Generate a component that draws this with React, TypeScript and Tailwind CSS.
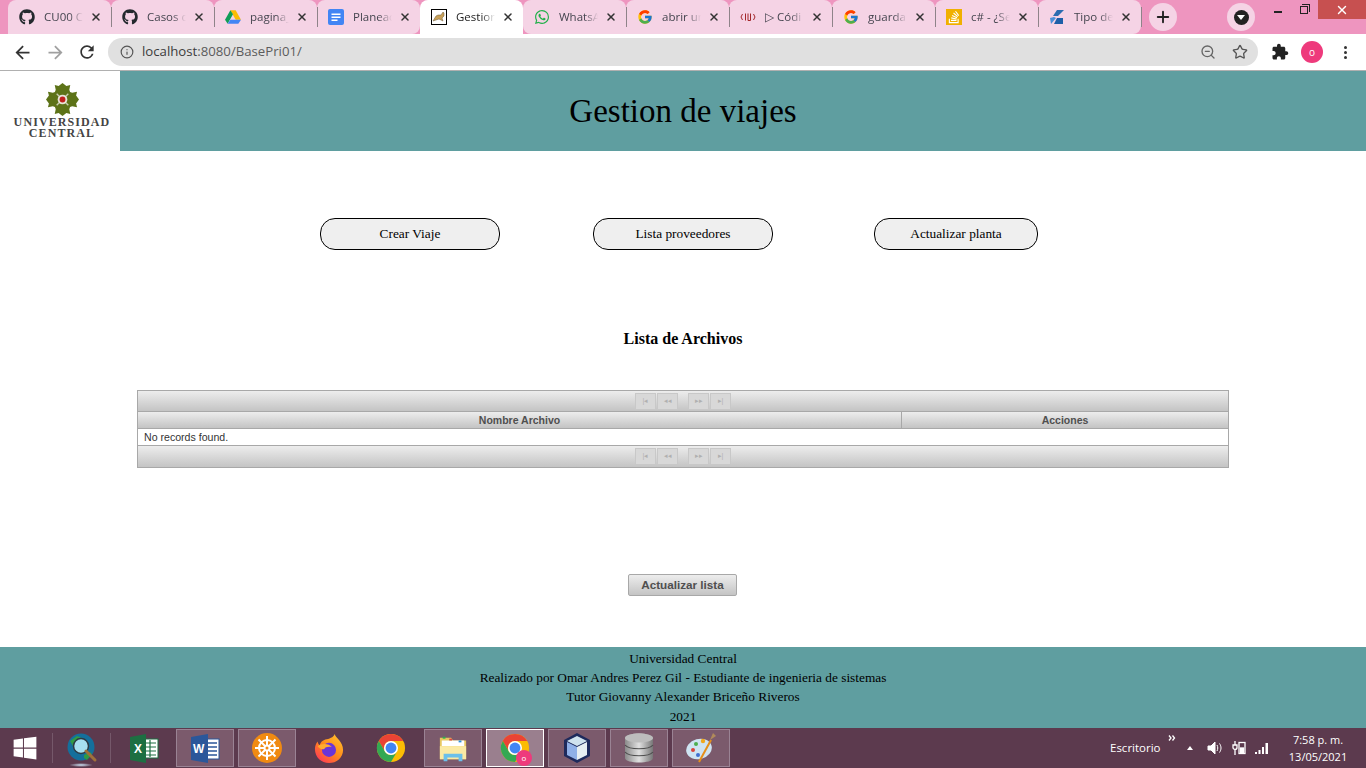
import type { ReactNode } from 'react';
import { FaGithub, FaWindows, FaStackOverflow } from 'react-icons/fa';
import { FcGoogle } from 'react-icons/fc';
import { IoLogoWhatsapp } from 'react-icons/io5';
import { Info, ZoomOut, Star, Plus, X } from 'lucide-react';

const Drive = () => (
  <svg viewBox="0 0 24 24" className="w-4 h-4">
    <path d="M8 2h8l8 14h-8z" fill="#fbbc04" />
    <path d="M8 2L0 16l4 6 8-14z" fill="#0f9d58" />
    <path d="M4 22h16l4-6H8z" fill="#4285f4" />
  </svg>
);

const Docs = () => (
  <svg viewBox="0 0 16 16" className="w-4 h-4">
    <rect width="16" height="16" rx="2" fill="#4285f4" />
    <path d="M3.5 4.5h9v1.6h-9zM3.5 7.5h9v1.6h-9zM3.5 10.5h6v1.6h-6z" fill="#fff" />
  </svg>
);

const Tomcat = () => (
  <svg viewBox="0 0 16 16" className="w-4 h-4">
    <rect x="0.5" y="0.5" width="15" height="15" fill="#fff" stroke="#000" />
    <path d="M2 12l3-5 2-1 3 0 2-3 1 1 0 3-2 2 1 3-2-1-2-1-3 1z" fill="#c9a15a" stroke="#6b5a3a" strokeWidth="0.5" />
  </svg>
);

const Udemy = () => (
  <svg viewBox="0 0 16 16" className="w-4 h-4" fill="none" stroke="#a3262a" strokeWidth="1">
    <path d="M2.500 5l-1.500 3 1.500 3M13.500 5l1.500 3-1.500 3M5.500 4.500v7M8 4.500v7h2.500v-7" />
  </svg>
);

const Stack = () => (
  <span className="w-4 h-4 bg-[#f0b000] flex items-center justify-center text-white">
    <FaStackOverflow className="w-3.5 h-3.5" />
  </span>
);

const Tipo = () => (
  <svg viewBox="0 0 16 16" className="w-4 h-4">
    <path d="M8 1h7L9 7H4z" fill="#2b6cb0" />
    <path d="M1 9l4-1 2 1-5 6z" fill="#4a90d9" />
    <path d="M8 9h6v6H5z" fill="#1d5fa8" />
  </svg>
);

const tabs: { title: string; icon: ReactNode; round?: string; sep?: boolean; active?: boolean }[] = [
  { title: 'CU00 C', icon: <FaGithub className="w-4 h-4 text-[#24292e]" />, sep: true },
  { title: 'Casos de', icon: <FaGithub className="w-4 h-4 text-[#24292e]" />, sep: true },
  { title: 'pagina_', icon: <Drive />, sep: true },
  { title: 'Planeac', icon: <Docs />, round: 'rounded-br-[8px]' },
  { title: 'Gestion', icon: <Tomcat />, active: true },
  { title: 'WhatsA', icon: <IoLogoWhatsapp className="w-4 h-4 text-[#22b04a]" />, round: 'rounded-bl-[8px]', sep: true },
  { title: 'abrir un', icon: <FcGoogle className="w-4 h-4" />, sep: true },
  { title: '▷ Códi', icon: <Udemy />, sep: true },
  { title: 'guarda', icon: <FcGoogle className="w-4 h-4" />, sep: true },
  { title: 'c# - ¿Se', icon: <Stack />, sep: true },
  { title: 'Tipo de', icon: <Tipo />, round: 'rounded-br-[8px]', sep: true },
];

function TabStrip() {
  return (
    <div className="h-[34px] bg-[#ee95bf] flex pl-2 shrink-0">
      {tabs.map((t) => (
        <div
          key={t.title}
          className={`relative w-[103px] h-[34px] flex items-center pl-[11px] rounded-t-[8px] ${t.active ? 'bg-white' : 'bg-[#f5d3e5]'} ${t.round ?? ''}`}
        >
          {t.icon}
          <span className={`ml-[9px] w-[39px] overflow-hidden whitespace-nowrap text-[11.5px] [mask-image:linear-gradient(to_right,black_65%,transparent)] ${t.active ? 'text-[#222]' : 'text-[#45454f]'}`}>
            {t.title}
          </span>
          <X className="absolute left-[82px] top-[11px] w-3 h-3 text-[#333]" strokeWidth={3} />
          {t.sep && <span className="absolute -right-px z-10 top-[7px] w-px h-5 bg-[#8f8389]" />}
        </div>
      ))}
      <div className="ml-2 mt-[3px] w-7 h-7 rounded-full bg-[#f5d3e5] flex items-center justify-center">
        <Plus className="w-[18px] h-[18px] text-[#222]" strokeWidth={2.5} />
      </div>
      <div className="ml-[50px] mt-[3px] w-7 h-7 rounded-full bg-[#f5d3e5] flex items-center justify-center">
        <span className="w-[15px] h-[15px] rounded-full bg-[#222] flex items-center justify-center">
          <span className="w-0 h-0 border-x-[4px] border-x-transparent border-t-[5px] border-t-white mt-[1px]" />
        </span>
      </div>
      <div className="ml-auto flex h-[19px]">
        <div className="w-6 flex items-center justify-center">
          <span className="w-2 h-[2px] bg-[#222] mt-[5px]" />
        </div>
        <div className="w-7 flex items-center justify-center">
          <span className="relative w-2 h-2 border border-[#222] mt-[1px] after:absolute after:left-[1px] after:-top-[3px] after:w-2 after:h-2 after:border-t after:border-r after:border-[#222]" />
        </div>
        <div className="w-12 bg-[#c75050] flex items-center justify-center">
          <X className="w-3.5 h-3.5 text-white" strokeWidth={2.5} />
        </div>
      </div>
    </div>
  );
}

function Toolbar() {
  return (
    <div className="h-[37px] bg-white border-b border-[#b0b0b0] flex items-start shrink-0 pt-1">
      <div className="w-[108px] h-7 flex items-center pl-[12px] gap-[12px]">
        <svg viewBox="0 0 24 24" className="w-[21px] h-[21px]" fill="#333">
          <path d="M20 11H7.830l5.590-5.590L12 4l-8 8 8 8 1.410-1.410L7.830 13H20v-2z" />
        </svg>
        <svg viewBox="0 0 24 24" className="w-[21px] h-[21px]" fill="#a0a0a0">
          <path d="M12 4l-1.410 1.410L16.170 11H4v2h12.170l-5.580 5.590L12 20l8-8z" />
        </svg>
        <svg viewBox="0 0 24 24" className="w-[20px] h-[20px] -ml-px" fill="#333">
          <path d="M17.650 6.350A7.958 7.958 0 0 0 12 4c-4.420 0-7.990 3.580-7.990 8s3.570 8 7.990 8c3.730 0 6.840-2.550 7.730-6h-2.080A5.990 5.990 0 0 1 12 18c-3.310 0-6-2.690-6-6s2.690-6 6-6c1.660 0 3.140.69 4.220 1.780L13 11h7V4l-2.350 2.350z" />
        </svg>
      </div>
      <div className="w-[1150px] h-7 bg-[#e0e0e0] rounded-full flex items-center pl-[12px] pr-[10px]">
        <Info className="w-[14px] h-[14px] text-[#555]" strokeWidth={2} />
        <span className="ml-[8px] text-[13.2px] text-[#3c3c3c]">
          localhost<span className="text-[#5c5c5c]">:8080/BasePri01/</span>
        </span>
        <ZoomOut className="ml-auto w-4 h-4 text-[#666]" strokeWidth={2} />
        <Star className="ml-[16px] w-4 h-4 text-[#555]" strokeWidth={2} />
      </div>
      <div className="flex-1 h-7 flex items-center pl-[13px]">
        <svg viewBox="0 0 24 24" className="w-[18px] h-[18px]" fill="#222">
          <path d="M20.500 11H19V7c0-1.100-.9-2-2-2h-4V3.500C13 2.120 11.880 1 10.500 1S8 2.120 8 3.500V5H4c-1.100 0-1.990.9-1.990 2v3.800H3.500c1.490 0 2.700 1.210 2.700 2.700s-1.210 2.700-2.700 2.700H2V20c0 1.100.9 2 2 2h3.800v-1.500c0-1.490 1.210-2.700 2.700-2.700 1.490 0 2.700 1.210 2.700 2.700V22H17c1.100 0 2-.9 2-2v-4h1.500c1.380 0 2.500-1.120 2.500-2.500S21.880 11 20.500 11z" />
        </svg>
        <span className="ml-[12px] w-[22px] h-[22px] rounded-full bg-[#ee3a7c] text-white text-[10px] flex items-center justify-center">o</span>
        <span className="ml-[21px] flex flex-col gap-[2px]">
          <i className="w-[3px] h-[3px] rounded-full bg-[#333]" />
          <i className="w-[3px] h-[3px] rounded-full bg-[#333]" />
          <i className="w-[3px] h-[3px] rounded-full bg-[#333]" />
        </span>
      </div>
    </div>
  );
}

const leaf = 'M17 0l4 3 4-1-1 5 1 3-8 7-8-7 1-3-1-5 4 1z';

const Emblem = () => (
  <svg viewBox="0 0 34 34" className="w-[33px] h-[33px]">
    <g fill="#5d7318">
      <path d={leaf} />
      <path d={leaf} transform="rotate(90 17 17)" />
      <path d={leaf} transform="rotate(180 17 17)" />
      <path d={leaf} transform="rotate(270 17 17)" />
    </g>
    <g fill="none" stroke="#c9ccb0" strokeWidth="1.400">
      <path d="M11 11l12 12M23 11L11 23" />
    </g>
    <circle cx="17" cy="17" r="5" fill="#e8e4d8" />
    <circle cx="17" cy="17" r="3" fill="#c0201c" />
  </svg>
);

function PageHeader() {
  return (
    <header className="h-[80px] flex shrink-0">
      <div className="w-[120px] flex flex-col items-center pt-[12px] pl-1 text-[#444] font-['Liberation_Serif',serif] font-bold">
        <Emblem />
        <span className="mt-[1px] text-[12px] leading-[11px] tracking-[1.1px] whitespace-nowrap">UNIVERSIDAD</span>
        <span className="text-[12px] leading-[10px] tracking-[1.1px]">CENTRAL</span>
      </div>
      <div className="flex-1 bg-[#5f9ea0] pr-[120px] pt-[2px] flex items-center justify-center">
        <h1 className="text-[33px] text-black">Gestion de viajes</h1>
      </div>
    </header>
  );
}

function PagerButtons({ height }: { height: string }) {
  const glyph = (d: string, cls: string) => (
    <span key={d} className={`w-[21px] h-[17px] border border-[#c8c8c8] bg-[#d8d8d8] flex items-center justify-center text-[7px] text-[#b0b0b0] ${cls}`}>
      {d}
    </span>
  );
  return (
    <div className={`${height} bg-gradient-to-b from-[#ededed] to-[#c4c4c4] flex items-center justify-center font-['Liberation_Sans',sans-serif]`}>
      {glyph('|◂', '')}
      {glyph('◂◂', 'ml-px')}
      {glyph('▸▸', 'ml-[10px]')}
      {glyph('▸|', 'ml-px')}
    </div>
  );
}

function FileTable() {
  return (
    <div className="mx-[137px] border border-[#a8a8a8] font-['Liberation_Sans',sans-serif]">
      <PagerButtons height="h-[20px]" />
      <div className="flex h-[18px] border-y border-[#a8a8a8] bg-gradient-to-b from-[#ededed] to-[#c4c4c4] font-bold text-[#4f4f4f] text-[10.5px] leading-[16px] text-center">
        <div className="w-[764px] border-r border-[#a8a8a8]">Nombre Archivo</div>
        <div className="flex-1">Acciones</div>
      </div>
      <div className="h-[16px] pl-[6px] bg-white text-[#333] text-[10.6px] leading-[16px]">No records found.</div>
      <div className="border-t border-[#a8a8a8]">
        <PagerButtons height="h-[21px]" />
      </div>
    </div>
  );
}

function PageFooter() {
  return (
    <footer className="h-[81px] bg-[#5f9ea0] text-center text-[13.33px] leading-[19px] pt-[2px] text-black shrink-0">
      <p>Universidad Central</p>
      <p>Realizado por Omar Andres Perez Gil - Estudiante de ingenieria de sistemas</p>
      <p>Tutor Giovanny Alexander Briceño Riveros</p>
      <p className="mt-px">2021</p>
    </footer>
  );
}

const Excel = () => (
  <svg viewBox="0 0 30 30" className="w-[30px] h-[30px]">
    <rect x="14" y="6" width="15" height="19" fill="#fff" stroke="#1d6f42" />
    <path d="M17 10h10M17 14h10M17 18h10M17 22h10M21 7v17" stroke="#1d6f42" strokeWidth="1.2" />
    <path d="M1 4l16-3v29L1 27z" fill="#1d6f42" />
    <text x="5" y="20" fontSize="12" fontWeight="bold" fill="#fff" fontFamily="Liberation Sans">X</text>
  </svg>
);

const Word = () => (
  <svg viewBox="0 0 30 30" className="w-[30px] h-[30px]">
    <rect x="14" y="6" width="15" height="20" fill="#fff" stroke="#2b579a" />
    <path d="M17 10h10M17 14h10M17 18h10M17 22h10" stroke="#2b579a" strokeWidth="1.4" />
    <path d="M1 4l17-3v29L1 27z" fill="#2b579a" />
    <text x="3" y="20" fontSize="12" fontWeight="bold" fill="#fff" fontFamily="Liberation Sans">W</text>
  </svg>
);

const Globe = () => (
  <svg viewBox="0 0 32 34" className="w-8 h-[34px] mt-[4px]">
    <defs>
      <radialGradient id="glow">
        <stop offset="0" stopColor="#cfe6f8" />
        <stop offset="1" stopColor="#cfe6f8" stopOpacity="0" />
      </radialGradient>
    </defs>
    <ellipse cx="15" cy="32" rx="12" ry="2" fill="url(#glow)" />
    <circle cx="15" cy="14" r="13.500" fill="#146f9c" />
    <path d="M4 8l7-5 5 2-4 5-5 3zM18 22l6-3 2 2-5 6-3-2z" fill="#2f9a46" />
    <circle cx="15" cy="13" r="7.500" fill="#a6dff0" stroke="#2c3a44" strokeWidth="1.500" />
    <path d="M20 18l9 9" stroke="#a0703a" strokeWidth="3" strokeLinecap="round" />
  </svg>
);

const Wheel = () => (
  <svg viewBox="0 0 30 30" className="w-[30px] h-[30px]">
    <circle cx="15" cy="15" r="15" fill="#f08a12" />
    <g stroke="#fff" strokeWidth="2" fill="none">
      <circle cx="15" cy="15" r="8" />
      <path d="M15 3v24M3 15h24M6.500 6.500l17 17M23.500 6.500l-17 17" />
    </g>
    <circle cx="15" cy="15" r="3.500" fill="#fff" />
    <circle cx="15" cy="15" r="1.500" fill="#f08a12" />
  </svg>
);

const Firefox = () => (
  <svg viewBox="0 0 32 32" className="w-[30px] h-[32px]">
    <defs>
      <linearGradient id="fx" x1="0.9" y1="0" x2="0.1" y2="1">
        <stop offset="0" stopColor="#ffc42e" />
        <stop offset="0.5" stopColor="#ff8a1a" />
        <stop offset="1" stopColor="#ff2f5e" />
      </linearGradient>
    </defs>
    <path d="M22 1c1 4 9 8 9 17 0 8-7 14-15 14S1 26 1 17c0-3 1-6 3-8 0 2 1 3 2 4 1-3 3-5 6-6 4-1 9-2 10-6z" fill="url(#fx)" />
    <circle cx="16" cy="18" r="7.500" fill="#6a35d8" />
    <path d="M4 14c4-3 12-3 15 1-4-1-7 0-8 2-3 1-6-1-7-3z" fill="#ffab2e" />
  </svg>
);

const Chrome = () => (
  <svg viewBox="0 0 32 32" className="w-[30px] h-[30px]">
    <circle cx="16" cy="16" r="15" fill="#fbbc04" />
    <path d="M3 8.500A15 15 0 0 1 29 8.500H16A7.500 7.500 0 0 0 9.500 19.750z" fill="#ea4335" />
    <path d="M3 8.500L9.500 19.750A7.500 7.500 0 0 0 22.500 19.750L16 31A15 15 0 0 1 3 8.500z" fill="#34a853" />
    <circle cx="16" cy="16" r="7.500" fill="#fff" />
    <circle cx="16" cy="16" r="5.800" fill="#4285f4" />
  </svg>
);

const Folder = () => (
  <svg viewBox="0 0 32 32" className="w-[30px] h-[30px]">
    <path d="M2 5h12l2 3h14v20H2z" fill="#e8c860" />
    <path d="M4 8h24v6H4z" fill="#fff" />
    <path d="M5 4h3v2H5z" fill="#2fae4e" />
    <path d="M12 6h3v2h-3z" fill="#d44" />
    <path d="M22 8h3v2h-3z" fill="#2a8fd8" />
    <path d="M2 14h28v14H2z" fill="#fbeaa4" />
    <path d="M6 22h20v8h-4v-4H10v4H6z" fill="#6cc0ea" />
  </svg>
);

const Cube = () => (
  <svg viewBox="0 0 32 32" className="w-8 h-8">
    <path d="M16 1l13 7v16l-13 7-13-7V8z" fill="#1e2a5c" />
    <path d="M16 4l10 5-10 5-10-5z" fill="#cfe2ee" />
    <path d="M6 10l10 5v13L6 23z" fill="#8fb0e8" />
    <path d="M26 10l-10 5v13l10-5z" fill="#e6eef2" />
  </svg>
);

const Database = () => (
  <svg viewBox="0 0 32 32" className="w-8 h-8">
    <defs>
      <linearGradient id="db" x1="0" x2="1">
        <stop offset="0" stopColor="#8a8a8a" />
        <stop offset="0.5" stopColor="#e0e0e0" />
        <stop offset="1" stopColor="#777" />
      </linearGradient>
    </defs>
    <path d="M2 6c0-6 28-6 28 0v20c0 6-28 6-28 0z" fill="url(#db)" />
    <ellipse cx="16" cy="6" rx="14" ry="4.500" fill="#bdbdbd" />
    <path d="M2 13c4 5 24 5 28 0M2 20c4 5 24 5 28 0" stroke="#4d4d4d" strokeWidth="1.200" fill="none" />
  </svg>
);

const Palette = () => (
  <svg viewBox="0 0 32 32" className="w-8 h-8">
    <ellipse cx="14" cy="17" rx="13" ry="10" fill="#cfe4f2" transform="rotate(-15 14 17)" />
    <circle cx="8" cy="18" r="2" fill="#d9453c" />
    <circle cx="11" cy="12" r="2" fill="#4caf50" />
    <circle cx="18" cy="9" r="2.200" fill="#f0a81e" />
    <circle cx="13" cy="23" r="2" fill="#3f6fd0" />
    <path d="M14 30L26 8" stroke="#e58f1a" strokeWidth="2" />
    <path d="M25 8l3-7 3 3z" fill="#b08a5a" />
  </svg>
);

function TaskButton({ children, active }: { children: ReactNode; active?: boolean }) {
  return (
    <div className={`w-[58px] h-[38px] border flex items-center justify-center relative ${active ? 'bg-[#9a7f8e] border-white' : 'bg-[#7b5a6c] border-[#9a8394]'}`}>
      {children}
    </div>
  );
}

function Taskbar() {
  return (
    <div className="h-[40px] bg-[#5c3a4e] flex items-center text-white shrink-0 font-['Open_Sans',sans-serif]">
      <div className="w-[52px] flex justify-center pr-[2px]">
        <FaWindows className="w-[26px] h-[26px]" />
      </div>
      <span className="w-px h-[30px] bg-[#75586a]" />
      <div className="w-[57px] flex justify-center">
        <Globe />
      </div>
      <span className="w-px h-[30px] bg-[#75586a]" />
      <div className="w-[65px] flex justify-center">
        <Excel />
      </div>
      <div className="flex gap-1">
        <TaskButton>
          <Word />
        </TaskButton>
        <TaskButton>
          <Wheel />
        </TaskButton>
      </div>
      <div className="w-[66px] flex justify-center">
        <Firefox />
      </div>
      <div className="w-[58px] flex justify-center">
        <Chrome />
      </div>
      <div className="flex gap-1 ml-1">
        <TaskButton>
          <Folder />
        </TaskButton>
        <TaskButton active>
          <Chrome />
          <span className="absolute left-[29px] top-[20px] w-4 h-4 rounded-full bg-[#ee3a7c] text-[8px] flex items-center justify-center">o</span>
        </TaskButton>
        <TaskButton>
          <Cube />
        </TaskButton>
        <TaskButton>
          <Database />
        </TaskButton>
        <TaskButton>
          <Palette />
        </TaskButton>
      </div>
      <div className="ml-[380px] text-[11.5px] w-[57px] whitespace-nowrap">Escritorio</div>
      <svg viewBox="0 0 8 6" className="w-2 h-[6px] self-start mt-[7px] ml-px" fill="none" stroke="#fff" strokeWidth="1.300">
        <path d="M1 0.500l2 2.500-2 2.500M4.500 0.500l2 2.500-2 2.500" />
      </svg>
      <span className="ml-[11px] w-0 h-0 border-x-[3.5px] border-x-transparent border-b-[4px] border-b-white" />
      <svg viewBox="0 0 16 16" className="ml-[14px] w-4 h-4" fill="none" stroke="#fff">
        <path d="M1 6h3l4-4v12l-4-4H1z" fill="#fff" />
        <path d="M10 5c1 2 1 4 0 6M12.500 3.500c2 3 2 6 0 9" />
      </svg>
      <svg viewBox="0 0 16 16" className="ml-[8px] w-4 h-4" fill="none" stroke="#fff" strokeWidth="1.300">
        <rect x="8" y="2.500" width="6" height="11" />
        <rect x="9.500" y="8" width="3" height="4.500" fill="#fff" />
        <path d="M4 1v4M2 5h4v2.500a2 2 0 0 1-4 0zM4 9.500V15" />
      </svg>
      <svg viewBox="0 0 16 16" className="ml-[7px] w-4 h-4" fill="#fff">
        <path d="M1 12h2v2H1zM4.500 10h2v4h-2zM8 7h2v7H8zM11.500 3h2.500v11h-2.500z" />
      </svg>
      <div className="ml-[18px] w-[60px] text-center text-[11px] leading-[17px] whitespace-nowrap">
        <div>7:58 p. m.</div>
        <div>13/05/2021</div>
      </div>
    </div>
  );
}

export default function App() {
  const pill = 'h-8 bg-[#efefef] border border-black rounded-[15px] text-[13.33px]';
  return (
    <div className="w-[1366px] h-[768px] overflow-hidden bg-white flex flex-col font-['Liberation_Serif',serif]">
      <div className="font-['Open_Sans',sans-serif] flex flex-col shrink-0">
        <TabStrip />
        <Toolbar />
      </div>
      <PageHeader />
      <main className="flex-1 flex flex-col">
        <div className="mt-[67px] pl-[320px] flex">
          <button className={`${pill} w-[180px]`}>Crear Viaje</button>
          <button className={`${pill} w-[180px] ml-[93px]`}>Lista proveedores</button>
          <button className={`${pill} w-[164px] ml-[101px]`}>Actualizar planta</button>
        </div>
        <h2 className="mt-[80px] text-center font-bold text-[16px] leading-[18px] text-black">Lista de Archivos</h2>
        <div className="mt-[42px]">
          <FileTable />
        </div>
        <div className="mt-[106px] flex justify-center pr-px">
          <button className="w-[109px] h-[22px] border border-[#a8a8a8] rounded-[2px] bg-gradient-to-b from-[#ededed] to-[#c4c4c4] font-['Liberation_Sans',sans-serif] font-bold text-[11.7px] text-[#4f4f4f]">
            Actualizar lista
          </button>
        </div>
      </main>
      <PageFooter />
      <Taskbar />
    </div>
  );
}
